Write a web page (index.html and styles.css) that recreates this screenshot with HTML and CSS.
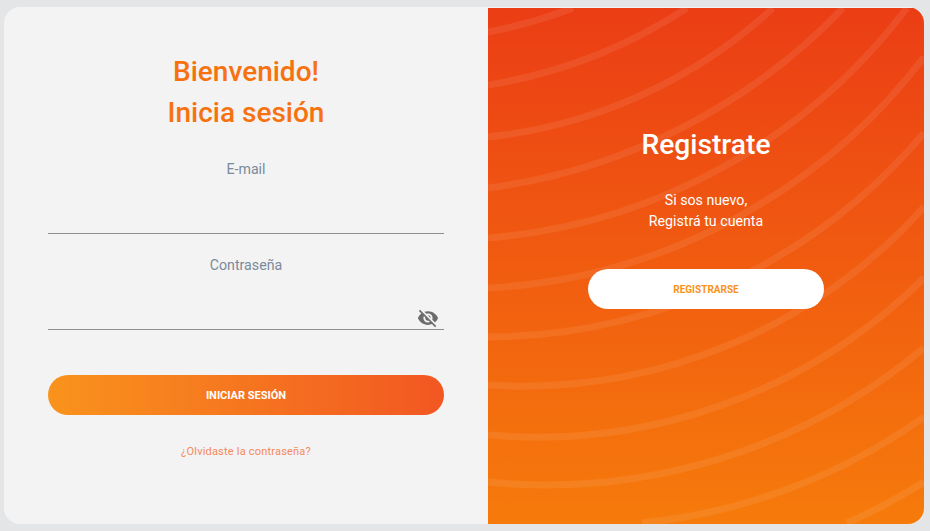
FILE: index.html
```html
<!DOCTYPE html>
<html lang="es">
<head>
  <meta charset="UTF-8">
  <title>Iniciar sesión</title>
  <link rel="stylesheet" href="styles.css">
</head>
<body>

<div class="card">
  <!-- login -->
  <form class="login">
    <h1 class="title">Bienvenido!<br>Inicia sesión</h1>

    <div class="field">
      <label for="email">E-mail</label>
      <input id="email" type="text">
    </div>

    <div class="field">
      <label for="password">Contraseña</label>
      <input id="password" type="password">
      <svg class="eye" viewBox="0 0 24 24" width="22" height="22">
        <path d="M12 7c2.76 0 5 2.24 5 5 0 .65-.13 1.26-.36 1.83l2.92 2.92c1.51-1.26 2.7-2.89 3.43-4.75-1.73-4.39-6-7.5-11-7.5-1.4 0-2.74.25-3.98.7l2.16 2.16C10.74 7.13 11.35 7 12 7zM2 4.27l2.28 2.28.46.46C3.08 8.3 1.78 10.02 1 12c1.73 4.39 6 7.5 11 7.5 1.55 0 3.03-.3 4.38-.84l.42.42L19.73 22 21 20.73 3.27 3 2 4.27zM7.53 9.8l1.55 1.55c-.05.21-.08.43-.08.65 0 1.66 1.34 3 3 3 .22 0 .44-.03.65-.08l1.55 1.55c-.67.33-1.41.53-2.2.53-2.76 0-5-2.24-5-5 0-.79.2-1.53.53-2.2zm4.31-.78l3.15 3.15.02-.16c0-1.66-1.34-3-3-3l-.17.01z"/>
      </svg>
    </div>

    <button class="btn btn-login" type="button">INICIAR SESIÓN</button>
    <a class="forgot" href="#">¿Olvidaste la contraseña?</a>
  </form>

  <!-- registro -->
  <div class="signup">
    <svg class="waves" viewBox="488 8 436 516" width="436" height="516">
      <path d="M488 32 A500 500 0 0 0 573 8"/>
      <path d="M488 85 A516 516 0 0 0 687 8"/>
      <path d="M488 137 A500 500 0 0 0 773 8"/>
      <path d="M488 188 A600 600 0 0 0 843 8"/>
      <path d="M488 238 A585 585 0 0 0 907 8"/>
      <path d="M488 288 A587 587 0 0 0 924 57"/>
      <path d="M488 337 A575 575 0 0 0 924 133"/>
      <path d="M488 385 A540 540 0 0 0 924 207"/>
      <path d="M488 435 A550 550 0 0 0 924 278"/>
      <path d="M488 482 A590 590 0 0 0 924 348"/>
      <path d="M642 523 A590 590 0 0 0 924 417"/>
      <path d="M847 523 A590 590 0 0 0 924 482"/>
    </svg>
    <div class="signup-body">
      <h2 class="signup-title">Registrate</h2>
      <p class="signup-text">Si sos nuevo,<br>Registrá tu cuenta</p>
      <button class="btn btn-signup" type="button">REGISTRARSE</button>
    </div>
  </div>
</div>

</body>
</html>
```

FILE: styles.css
```css
* {
  box-sizing: border-box;
}
body {
  margin: 0;
  height: 531px;
  padding: 7px 6px 7px 4px;
  background: #e4e5e7;
  font-family: Roboto, sans-serif;
  overflow: hidden;
}
.card {
  display: flex;
  height: 517px;
  border-radius: 16px;
  overflow: hidden;
}
.login {
  width: 484px;
  padding: 44px 44px 0;
  background: #f3f3f3;
  display: flex;
  flex-direction: column;
  align-items: center;
}
.title {
  margin: 0 0 26px;
  font-size: 28px;
  font-weight: 500;
  line-height: 41px;
  text-align: center;
  color: #f7720f;
}
.field {
  position: relative;
  width: 100%;
  margin-bottom: 21px;
}
.field label {
  display: block;
  font-size: 14.2px;
  line-height: 20px;
  text-align: center;
  color: #7b8a9a;
}
.field input {
  display: block;
  width: 100%;
  height: 55px;
  border: 0;
  border-bottom: 1px solid #8e8e8e;
  background: transparent;
  outline: none;
}
.eye {
  position: absolute;
  right: 5px;
  bottom: 1px;
  fill: #6c6c6c;
}
.btn {
  display: block;
  height: 40px;
  border: 0;
  border-radius: 20px;
  font-family: Roboto, sans-serif;
  font-weight: 700;
}
.btn-login {
  width: 100%;
  margin-top: 24px;
  background: linear-gradient(90deg, #f9931c, #f25722);
  color: #fff;
  font-size: 11px;
}
.forgot {
  margin-top: 30px;
  font-size: 11px;
  letter-spacing: 0.2px;
  line-height: 14px;
  color: #f5895a;
  text-decoration: none;
}
.signup {
  position: relative;
  width: 436px;
  border-top: 1px solid #f3f3f3;
  background: linear-gradient(180deg, #eb3d15, #f67b0b);
}
.waves {
  position: absolute;
  top: 0;
  left: 0;
}
.waves path {
  fill: none;
  stroke: #fff;
  stroke-opacity: 0.08;
  stroke-width: 7;
}
.signup-body {
  position: relative;
  padding-top: 120px;
  display: flex;
  flex-direction: column;
  align-items: center;
  color: #fff;
}
.signup-title {
  margin: 0 0 28px;
  font-size: 28.2px;
  font-weight: 500;
  line-height: 34px;
}
.signup-text {
  margin: 0 0 37px;
  font-size: 14.2px;
  line-height: 21px;
  text-align: center;
}
.btn-signup {
  width: 236px;
  background: #fff;
  color: #f9931c;
  font-size: 10px;
}
```
